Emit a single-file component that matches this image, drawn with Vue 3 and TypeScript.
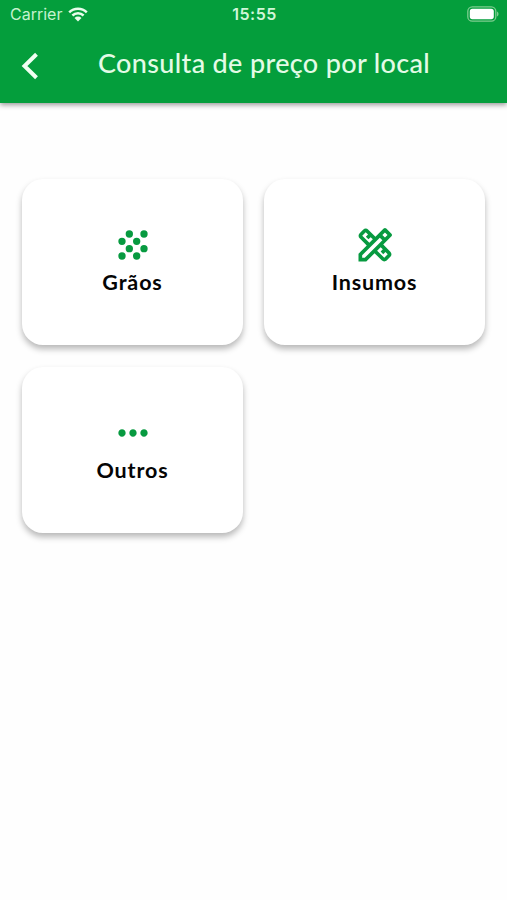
<script setup lang="ts">
interface Category {
  id: string
  label: string
  icon: string
}

const categories: Category[] = [
  {
    id: 'graos',
    label: 'Grãos',
    icon: 'M8 6a2 2 0 1 0 4 0 2 2 0 1 0-4 0zM16 6a2 2 0 1 0 4 0 2 2 0 1 0-4 0zM4 10a2 2 0 1 0 4 0 2 2 0 1 0-4 0zM12 10a2 2 0 1 0 4 0 2 2 0 1 0-4 0zM8 14a2 2 0 1 0 4 0 2 2 0 1 0-4 0zM16 14a2 2 0 1 0 4 0 2 2 0 1 0-4 0zM4 18a2 2 0 1 0 4 0 2 2 0 1 0-4 0zM12 18a2 2 0 1 0 4 0 2 2 0 1 0-4 0z',
  },
  {
    id: 'insumos',
    label: 'Insumos',
    icon: 'M20.97 7.27c.39-.39.39-1.02 0-1.41l-2.83-2.83c-.39-.39-1.02-.39-1.41 0l-4.49 4.49-3.89-3.89c-.78-.78-2.05-.78-2.83 0l-1.9 1.9c-.78.78-.78 2.05 0 2.83l3.89 3.89L3 16.76V21h4.24l4.52-4.52 3.89 3.89c.95.95 2.23.6 2.83 0l1.9-1.9c.78-.78.78-2.05 0-2.83l-3.89-3.89 4.48-4.48zM5.04 6.94l1.89-1.9L8.2 6.31 7.02 7.5l1.41 1.41 1.19-1.19 1.2 1.2-1.9 1.9-3.88-3.88zm11.23 7.44l-1.19 1.19 1.41 1.41 1.19-1.19 1.27 1.27-1.9 1.9-3.89-3.89 1.9-1.9 1.21 1.21zM6.41 19H5v-1.41l9.61-9.61 1.3 1.3.11.11L6.41 19zm9.61-12.44l1.41-1.41 1.41 1.41-1.41 1.41-1.41-1.41z',
  },
  {
    id: 'outros',
    label: 'Outros',
    icon: 'M6 10c-1.1 0-2 .9-2 2s.9 2 2 2 2-.9 2-2-.9-2-2-2zm12 0c-1.1 0-2 .9-2 2s.9 2 2 2 2-.9 2-2-.9-2-2-2zm-6 0c-1.1 0-2 .9-2 2s.9 2 2 2 2-.9 2-2-.9-2-2-2z',
  },
]
</script>

<template>
  <div class="screen">
    <header class="header">
      <div class="status">
        <div class="carrier">
          <span class="carrier-name">Carrier</span>
          <svg class="wifi" viewBox="0 0 20 15" aria-hidden="true">
            <path d="M1.2 5.3a12.7 12.7 0 0 1 17.6 0M4.4 8.5a8.1 8.1 0 0 1 11.2 0" />
            <path class="wifi-dot" d="M6.5 11a5 5 0 0 1 7 0L10 14.6z" />
          </svg>
        </div>
        <span class="time">15:55</span>
        <div class="battery">
          <svg viewBox="0 0 32 16" aria-hidden="true">
            <rect class="battery-case" x=".8" y=".8" width="28" height="14.4" rx="4.5" />
            <rect class="battery-level" x="2.8" y="2.8" width="24" height="10.4" rx="2.6" />
            <path class="battery-tip" d="M30 5.5c2 .8 2 4.2 0 5z" />
          </svg>
        </div>
      </div>
      <div class="toolbar">
        <button class="back" type="button" aria-label="Voltar">
          <svg viewBox="0 0 18 28" aria-hidden="true"><path d="M15.5 2.2 3.5 14l12 11.8" /></svg>
        </button>
        <h1 class="title">Consulta de preço por local</h1>
      </div>
    </header>
    <main class="grid">
      <button v-for="c in categories" :key="c.id" class="card" type="button">
        <svg class="icon" viewBox="0 0 24 24" aria-hidden="true"><path :d="c.icon" /></svg>
        <span class="label">{{ c.label }}</span>
      </button>
    </main>
  </div>
</template>

<style>
body {
  background: #fefefe;
}
</style>

<style scoped>
.screen {
  height: 900px;
  background: #fefefe;
  overflow: hidden;
}
.header {
  height: 103px;
  background: #049e3c;
  box-shadow: 0 2px 5px rgba(0, 0, 0, 0.4);
  color: #e3fbe6;
}
.status {
  height: 28px;
  padding: 0 8px 0 10px;
  display: grid;
  grid-template-columns: 1fr auto 1fr;
  align-items: center;
  font-family: Inter, sans-serif;
}
.carrier {
  display: flex;
  align-items: center;
  gap: 6px;
}
.carrier-name {
  font-size: 16px;
  line-height: 20px;
  color: #c5f2ce;
}
.wifi {
  width: 20px;
  height: 15px;
  fill: none;
  stroke: #e9fdec;
  stroke-width: 2.5;
}
.wifi-dot {
  fill: #e9fdec;
  stroke: none;
}
.time {
  font-size: 16px;
  line-height: 20px;
  font-weight: 600;
  letter-spacing: 0.5px;
  color: #d0f6d8;
}
.battery {
  display: flex;
  justify-content: flex-end;
}
.battery svg {
  width: 32px;
  height: 16px;
}
.battery-case {
  fill: none;
  stroke: #7dcd8f;
  stroke-width: 1.3;
}
.battery-level {
  fill: #fff;
}
.battery-tip {
  fill: #7dcd8f;
}
.toolbar {
  height: 75px;
  display: flex;
  align-items: flex-start;
}
.back {
  width: 98px;
  padding: 24px 0 0 21px;
  border: 0;
  background: none;
  text-align: left;
}
.back svg {
  display: block;
  width: 18px;
  height: 28px;
  fill: none;
  stroke: #f0fff2;
  stroke-width: 4;
}
.title {
  margin: 19px 0 0;
  font: 500 27px/32px Lato, sans-serif;
  letter-spacing: 0.34px;
  white-space: nowrap;
}
.grid {
  padding: 76px 21px 0 22px;
  display: grid;
  grid-template-columns: 221px 221px;
  column-gap: 21px;
  row-gap: 22px;
}
.card {
  height: 166px;
  padding: 0 0 4px;
  border: 0;
  border-radius: 21px;
  background: #fff;
  box-shadow: 0 4px 6px rgba(0, 0, 0, 0.28);
  display: flex;
  flex-direction: column;
  align-items: center;
  justify-content: center;
}
.icon {
  width: 44px;
  height: 44px;
  fill: #079a40;
}
.label {
  font: 700 21.5px/30px Lato, sans-serif;
  letter-spacing: 0.85px;
  color: #050505;
}
</style>
